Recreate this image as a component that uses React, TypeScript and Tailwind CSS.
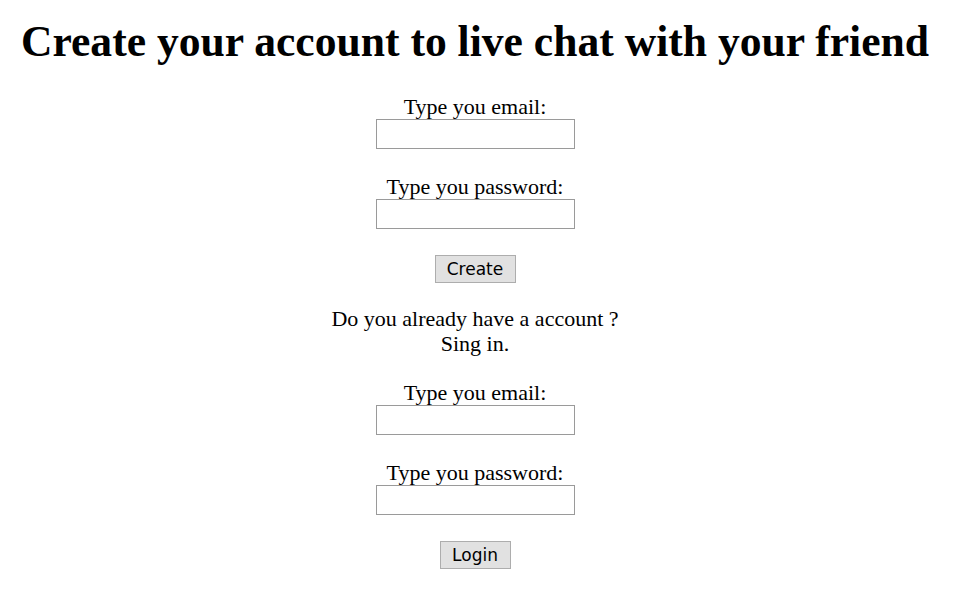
const Field = ({ label, type }: { label: string; type: string }) => (
  <div className="flex flex-col items-center">
    <label className="leading-[25px]">{label}</label>
    <input
      type={type}
      className="w-[199px] h-[30px] border border-[#9a9a9a] bg-white outline-none px-1"
    />
  </div>
);

const Btn = ({ text, w }: { text: string; w: string }) => (
  <button
    className={`h-[28px] ${w} border border-[#adadad] bg-[#e1e1e1] text-[17px] leading-none text-black font-['DejaVu_Sans',sans-serif]`}
  >
    {text}
  </button>
);

const App = () => {
  return (
    <div className="min-h-[602px] bg-white text-black font-['Liberation_Serif',serif] text-[22px] flex flex-col items-center pr-[14px]">
      {/* Title */}
      <h1 className="text-[43.6px] font-bold leading-[50px] mt-[16px]">
        Create your account to live chat with your friend
      </h1>

      {/* Create account */}
      <div className="flex flex-col items-center mt-[28px]">
        <Field label="Type you email:" type="email" />
        <div className="mt-[25px]">
          <Field label="Type you password:" type="password" />
        </div>
        <div className="mt-[26px] flex">
          <Btn text="Create" w="w-[81px]" />
        </div>
      </div>

      {/* Sign in */}
      <div className="flex flex-col items-center mt-[23px] leading-[25px]">
        <p>Do you already have a account ?</p>
        <p>Sing in.</p>
      </div>

      <div className="flex flex-col items-center mt-[24px]">
        <Field label="Type you email:" type="email" />
        <div className="mt-[25px]">
          <Field label="Type you password:" type="password" />
        </div>
        <div className="mt-[26px] flex">
          <Btn text="Login" w="w-[71px]" />
        </div>
      </div>
    </div>
  );
};

export default App;
